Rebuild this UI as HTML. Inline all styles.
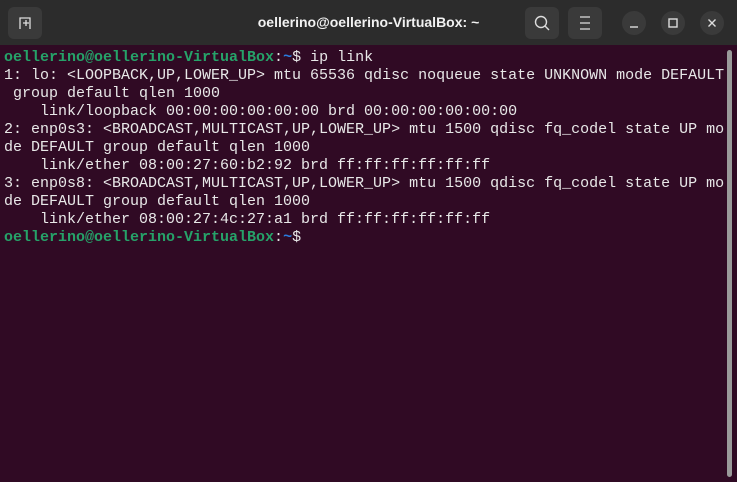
<!DOCTYPE html>
<html><head><style>
html,body{margin:0;padding:0;width:737px;height:482px;overflow:hidden;background:#2c2c2c;}
.tb{position:absolute;left:0;top:0;width:737px;height:45px;background:#2c2c2c;border-radius:10px 10px 0 0;}
.title{position:absolute;left:0;width:737px;top:14px;text-align:center;color:#f2f2f2;font:bold 14px "Liberation Sans",sans-serif;}
.btn{position:absolute;top:7px;width:34px;height:32px;background:#3a3a3a;border-radius:6px;}
.circ{position:absolute;top:11px;width:24px;height:24px;border-radius:50%;background:#3a3a3a;}
.term{position:absolute;left:0;top:45px;width:737px;height:437px;background:#300a24;}
pre{margin:0;position:absolute;left:4px;top:4px;font:15px/18px "Liberation Mono",monospace;color:#e8e8e8;}
.g{color:#26a269;font-weight:bold}.b{color:#2a7bde;font-weight:bold}
.sb{position:absolute;left:727px;top:50px;width:5px;height:427px;background:#9a9a9a;border-radius:3px;}
</style></head><body>
<div class="tb">
<div class="btn" style="left:8px"><svg width="34" height="32"><path d="M12 22V11h10v11M15 16h6M18 13v6" stroke="#ddd" stroke-width="1.3" fill="none"/></svg></div>
<div class="title">oellerino@oellerino-VirtualBox: ~</div>
<div class="btn" style="left:525px"><svg width="34" height="32"><circle cx="16" cy="15" r="5.5" stroke="#ddd" stroke-width="1.4" fill="none"/><path d="M20 19l4 4" stroke="#ddd" stroke-width="1.4"/></svg></div>
<div class="btn" style="left:568px"><svg width="34" height="32"><path d="M12 10h10M12 16h10M12 22h10" stroke="#ddd" stroke-width="1.3"/></svg></div>
<div class="circ" style="left:622px"><svg width="24" height="24"><path d="M8 16h8" stroke="#ddd" stroke-width="1.4"/></svg></div>
<div class="circ" style="left:661px"><svg width="24" height="24"><rect x="8" y="8" width="8" height="8" stroke="#ddd" stroke-width="1.4" fill="none"/></svg></div>
<div class="circ" style="left:700px"><svg width="24" height="24"><path d="M8.5 8.5l7 7M15.5 8.5l-7 7" stroke="#ddd" stroke-width="1.4"/></svg></div>
</div>
<div class="term">
<pre><span class="g">oellerino@oellerino-VirtualBox</span>:<span class="b">~</span>$ ip link
1: lo: &lt;LOOPBACK,UP,LOWER_UP&gt; mtu 65536 qdisc noqueue state UNKNOWN mode DEFAULT
 group default qlen 1000
    link/loopback 00:00:00:00:00:00 brd 00:00:00:00:00:00
2: enp0s3: &lt;BROADCAST,MULTICAST,UP,LOWER_UP&gt; mtu 1500 qdisc fq_codel state UP mo
de DEFAULT group default qlen 1000
    link/ether 08:00:27:60:b2:92 brd ff:ff:ff:ff:ff:ff
3: enp0s8: &lt;BROADCAST,MULTICAST,UP,LOWER_UP&gt; mtu 1500 qdisc fq_codel state UP mo
de DEFAULT group default qlen 1000
    link/ether 08:00:27:4c:27:a1 brd ff:ff:ff:ff:ff:ff
<span class="g">oellerino@oellerino-VirtualBox</span>:<span class="b">~</span>$</pre>
<div class="sb" style="top:5px"></div>
</div>
</body></html>
